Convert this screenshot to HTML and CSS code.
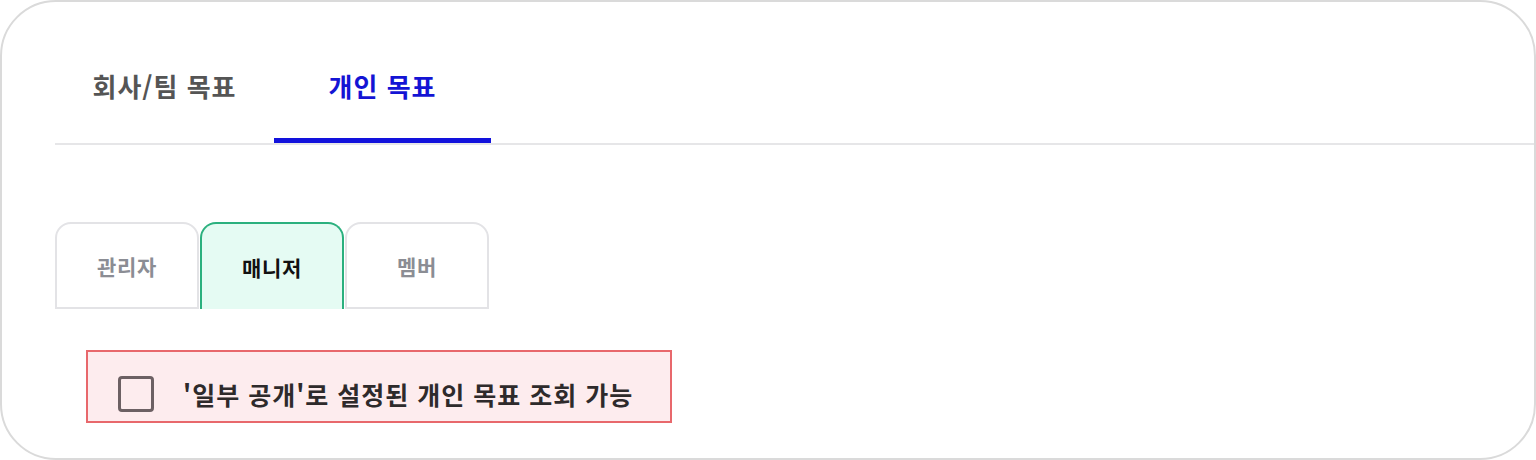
FILE: index.html
```html
<!DOCTYPE html>
<html lang="ko">
  <head>
    <meta charset="UTF-8">
    <title>목표 권한 설정</title>
    <link rel="stylesheet" href="styles.css">
  </head>
  <body>
    <div class="card">
      <!-- Goal type tabs -->
      <div class="goal-tabs">
        <div class="goal-tab">회사/팀 목표</div>
        <div class="goal-tab active">개인 목표</div>
      </div>

      <!-- Role tabs -->
      <div class="role-tabs">
        <div class="role-tab">관리자</div>
        <div class="role-tab active">매니저</div>
        <div class="role-tab">멤버</div>
      </div>

      <!-- Permission option -->
      <label class="option">
        <span class="check-box"></span>
        <span class="option-text">'일부 공개'로 설정된 개인 목표 조회 가능</span>
      </label>
    </div>
  </body>
</html>
```

FILE: styles.css
```css
body {
  margin: 0;
  font-family: 'Noto Sans CJK KR', 'Noto Sans', sans-serif;
  background-color: #fff;
}

.card {
  width: 1536px;
  height: 460px;
  box-sizing: border-box;
  border: 2px solid #dadada;
  border-radius: 56px;
  padding: 38px 0 0 53px;
  background-color: #fff;
}

.goal-tabs {
  display: flex;
  border-bottom: 2px solid #e6e6e8;
}

.goal-tab {
  width: 219px;
  text-align: center;
  font-size: 26px;
  font-weight: 700;
  letter-spacing: 1px;
  line-height: 32px;
  color: #555;
  padding: 30px 0 36px;
  border-bottom: 5px solid transparent;
}

.goal-tab.active {
  width: 217px;
  color: #1414d4;
  border-bottom-color: #1212dc;
}

.role-tabs {
  display: flex;
  gap: 1px;
  margin-top: 77px;
}

.role-tab {
  width: 144px;
  height: 87px;
  box-sizing: border-box;
  border: 2px solid #e3e3e6;
  border-radius: 16px 16px 0 0;
  display: flex;
  align-items: center;
  justify-content: center;
  font-size: 21px;
  font-weight: 700;
  letter-spacing: 0.7px;
  color: #8b8d94;
}

.role-tab.active {
  border-color: #2bb07e;
  border-bottom: none;
  background-color: #e5fbf3;
  color: #111;
}

.option {
  display: flex;
  align-items: center;
  gap: 29px;
  width: 586px;
  box-sizing: border-box;
  margin: 41px 0 0 31px;
  padding: 24px 0 9px 30px;
  border: 2px solid #e8686c;
  background-color: #fdecee;
}

.check-box {
  width: 36px;
  height: 36px;
  box-sizing: border-box;
  border: 3px solid #6c6063;
  border-radius: 4px;
  flex-shrink: 0;
}

.option-text {
  font-size: 25px;
  font-weight: 700;
  letter-spacing: 1px;
  color: #2e2a2b;
  line-height: 36px;
}
```
